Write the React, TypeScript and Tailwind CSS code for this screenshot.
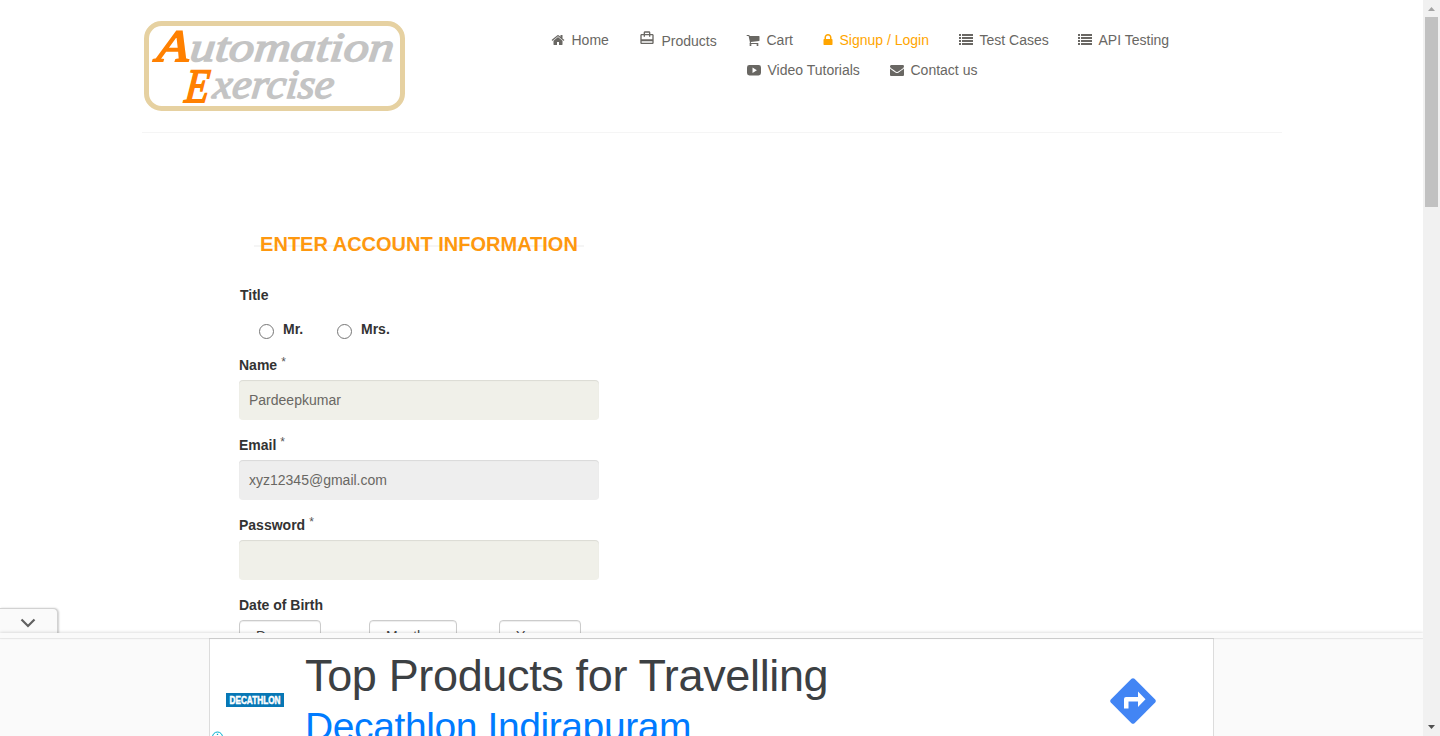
import type { ReactNode } from "react";
import { MdCardTravel } from "react-icons/md";

function Glyph({ d, className }: { d: string; className: string }) {
  return (
    <svg viewBox="0 0 1792 1792" fill="currentColor" className={className}>
      <path d={d} />
    </svg>
  );
}

const HOME =
  "M1472 992v480q0 26-19 45t-45 19h-384v-384h-256v384h-384q-26 0-45-19t-19-45v-480q0-1 .5-3t.5-3l575-474 575 474q1 2 1 6zm223-69l-62 74q-8 9-21 11h-3q-13 0-21-7l-692-577-692 577q-12 8-24 7-13-2-21-11l-62-74q-8-10-7-23.5t11-21.5l719-599q32-26 76-26t76 26l244 204v-195q0-14 9-23t23-9h192q14 0 23 9t9 23v408l219 182q10 8 11 21.5t-7 23.5z";
const CART =
  "M704 1536q0 52-38 90t-90 38-90-38-38-90 38-90 90-38 90 38 38 90zm896 0q0 52-38 90t-90 38-90-38-38-90 38-90 90-38 90 38 38 90zm128-1088v512q0 24-16.5 42.5t-40.5 21.5l-1044 122q13 60 13 70 0 16-24 64h920q26 0 45 19t19 45-19 45-45 19h-1024q-26 0-45-19t-19-45q0-11 8-31.5t16-36 21.5-40 15.5-29.5l-177-823h-204q-26 0-45-19t-19-45 19-45 45-19h256q16 0 28.5 6.5t19.5 15.5 13 24.5 8 26 5.5 29.5 4.5 26h1201q26 0 45 19t19 45z";
const LOCK =
  "M640 768h512v-192q0-106-75-181t-181-75-181 75-75 181v192zm832 96v576q0 40-28 68t-68 28h-960q-40 0-68-28t-28-68v-576q0-40 28-68t68-28h32v-192q0-184 132-316t316-132 316 132 132 316v192h32q40 0 68 28t28 68z";
const ENVELOPE =
  "M1792 710v794q0 66-47 113t-113 47h-1472q-66 0-113-47t-47-113v-794q44 49 101 87 362 246 497 345 57 42 92.5 65.5t94.5 48 110 24.5h2q51 0 110-24.5t94.5-48 92.5-65.5q170-123 498-345 57-39 100-87zm0-294q0 79-49 151t-122 123q-376 261-468 325-10 7-42.5 31t-54 38.5-52 32.5-57.5 27-50 9h-2q-23 0-50-9t-57.5-27-52-32.5-54-38.5-42.5-31q-91-64-262-182.5t-205-142.5q-62-42-117-115.5t-55-136.5q0-78 41.5-130t118.5-52h1472q65 0 112.5 47t47.5 113z";

function ListIcon() {
  return (
    <svg viewBox="0 0 14 14" fill="currentColor" className="size-3.5">
      {[1, 4, 7, 10].map((y) => (
        <g key={y}>
          <rect x="0" y={y} width="2" height="2" />
          <rect x="3" y={y} width="11" height="2" />
        </g>
      ))}
    </svg>
  );
}

function PlayIcon() {
  return (
    <svg viewBox="0 0 14 14" className="size-3.5">
      <rect x="0" y="2" width="14" height="10.4" rx="2.4" fill="currentColor" />
      <path d="M5.5 4.5v5.4l4.4-2.7z" fill="#fff" />
    </svg>
  );
}

function NavItem({ icon, label, className }: { icon: ReactNode; label: string; className: string }) {
  return (
    <a className={`flex h-5 shrink-0 items-center whitespace-nowrap ${className}`}>
      {icon}
      <span>{label}</span>
    </a>
  );
}

function Logo() {
  return (
    <svg viewBox="0 0 264 92" className="h-[92px] w-[264px]" fontFamily="'Liberation Serif', serif" fontStyle="italic">
      <rect x="4.5" y="3.5" width="256" height="85" rx="15" fill="#fff" stroke="#e6d1a1" strokeWidth="5" />
      <text transform="translate(14 41) skewX(-6)" fontSize="45" fill="#ff8000" stroke="#ff8000" strokeWidth="1.8" textLength="32" lengthAdjust="spacingAndGlyphs">A</text>
      <text transform="translate(47 41) skewX(-6)" fontSize="41" stroke="#c4c4c4" strokeWidth="1.5" fill="#c4c4c4" textLength="204" lengthAdjust="spacingAndGlyphs">utomation</text>
      <text transform="translate(42 82) skewX(-6)" fontSize="48" fill="#ff8000" stroke="#ff8000" strokeWidth="1.8" textLength="24" lengthAdjust="spacingAndGlyphs">E</text>
      <text transform="translate(70 78) skewX(-6)" fontSize="41" stroke="#c4c4c4" strokeWidth="1.5" fill="#c4c4c4" textLength="121" lengthAdjust="spacingAndGlyphs">xercise</text>
    </svg>
  );
}

function Field({ label, value, tone }: { label: string; value: string; tone: string }) {
  return (
    <div className="h-20">
      <label className="flex h-[25px] gap-1 text-sm leading-5 font-bold">
        {label}
        <span className="-mt-[3px] text-[12px] font-normal text-[#555]">*</span>
      </label>
      <div className={`flex h-10 items-center rounded px-2.5 text-sm text-[#696763] shadow-[inset_0_1px_1px_rgba(0,0,0,0.09)] ${tone}`}>
        {value}
      </div>
    </div>
  );
}

function Select({ label, width }: { label: string; width: string }) {
  return (
    <div className={`flex h-[34px] items-center rounded border border-[#ccc] bg-white pb-0.5 pl-4 text-sm text-[#444] shadow-[inset_0_1px_1px_rgba(0,0,0,0.075)] ${width}`}>
      {label}
    </div>
  );
}

function Radio({ label }: { label: string }) {
  return (
    <label className="flex w-[78px] gap-[9px] leading-5">
      <span className="mt-[5px] size-[15px] rounded-full border border-[#767676] bg-white" />
      {label}
    </label>
  );
}

function AdBanner() {
  return (
    <div className="absolute inset-x-0 bottom-0 flex h-32 flex-col">
      <div className="z-10 -mb-px flex h-[26px] w-[58px] shrink-0 items-center justify-center rounded-tr-[5px] border-t border-r border-[#d2d2d2] bg-[#fafafa] pt-[3px] pr-px shadow-[1px_0_2px_rgba(0,0,0,0.2)]">
        <svg viewBox="0 0 16 10" className="h-2.5 w-4" fill="none" stroke="#616161" strokeWidth="2.2">
          <path d="M1.5 1.5 8 8l6.5-6.5" />
        </svg>
      </div>
      <div className="z-20 h-[5px] shrink-0 bg-[#fafafa] shadow-[0_-1px_3px_rgba(0,0,0,0.12),0_1px_1px_rgba(0,0,0,0.06)]" />
      <div className="flex grow justify-center overflow-hidden bg-[#fafafa]">
        <div className="flex h-[98px] w-[1005px] border-x border-t border-[#dcdcdc] bg-white">
          <div className="flex w-[95px] shrink-0 flex-col pl-4">
            <div className="mt-[54px] flex h-3.5 w-[58px] shrink-0 items-center justify-center bg-[#0777b5]">
              <svg viewBox="0 0 58 14" className="h-3.5 w-[58px]">
                <text x="3.5" y="10.7" textLength="51" lengthAdjust="spacingAndGlyphs" fontFamily="'Liberation Sans', sans-serif" fontSize="10.5" fontWeight="700" fill="#fff" stroke="#fff" strokeWidth=".5">DECATHLON</text>
              </svg>
            </div>
            <svg viewBox="0 0 12 12" className="mt-[24px] -ml-[15px] size-3 shrink-0" fill="none" stroke="#00aecd">
              <circle cx="6.5" cy="6" r="5" />
              <path d="M6.5 5v4M6.5 2.7v1.2" strokeWidth="1.3" />
            </svg>
          </div>
          <div className="w-[805px] shrink-0 whitespace-nowrap">
            <div className="mt-2.5 h-[50px] text-[45px] leading-[54px] tracking-[-0.35px] text-[#3c4043]">Top Products for Travelling</div>
            <div className="text-[39px] leading-[56px] tracking-[-0.4px] text-[#007bff]">Decathlon Indirapuram</div>
          </div>
          <svg viewBox="0 0 46 46" className="mt-[38.500px] size-[46px] shrink-0">
            <path d="M21.5.8q1.5-1.2 3 0l20.7 20.7q1.2 1.5 0 3L24.5 45.2q-1.500 1.200-3 0L.8 24.500q-1.200-1.500 0-3z" fill="#4285f4" />
            <path d="M14 30.500V21q0-2 2-2h12v-5.500l7.500 7.700-7.500 7.700V23.500h-9.500v7z" fill="#fff" />
          </svg>
        </div>
      </div>
    </div>
  );
}

function Scrollbar() {
  return (
    <div className="flex h-full w-[17px] shrink-0 flex-col items-center bg-[#f1f1f1]">
      <svg viewBox="0 0 17 17" className="size-[17px] shrink-0">
        <path d="M5 11 8.500 7 12 11z" fill="#a3a3a3" />
      </svg>
      <div className="h-[190px] w-[13px] bg-[#c1c1c1]" />
      <svg viewBox="0 0 17 17" className="mt-auto size-[17px] shrink-0">
        <path d="M5 6 8.500 10 12 6z" fill="#505050" />
      </svg>
    </div>
  );
}

export default function App() {
  return (
    <div className="flex h-[736px] w-[1440px] overflow-hidden bg-white font-['Liberation_Sans',Arial,sans-serif] text-sm text-[#333]">
      <div className="relative h-full w-[1423px] overflow-hidden">
        <header className="mx-auto flex h-[133px] w-[1140px] border-b border-[#f5f5f5] pt-5">
          <Logo />
          <nav className="ml-[145px] flex pt-2.5 text-[#696763]">
            <NavItem className="w-[88px] gap-[7px]" label="Home" icon={<Glyph d={HOME} className="size-3.5" />} />
            <NavItem className="mt-px w-[108px] gap-2" label="Products" icon={<MdCardTravel className="-mt-[7px] -mr-px size-4" />} />
            <div className="flex flex-col gap-2.5">
              <div className="flex">
                <NavItem className="w-[76px] gap-[7px]" label="Cart" icon={<Glyph d={CART} className="-ml-px size-3.5" />} />
                <NavItem className="w-[136px] gap-[5px] text-[#ffa500]" label="Signup / Login" icon={<Glyph d={LOCK} className="-ml-[2px] size-3.5" />} />
                <NavItem className="w-[119px] gap-[7px]" label="Test Cases" icon={<ListIcon />} />
                <NavItem className="gap-[7px]" label="API Testing" icon={<ListIcon />} />
              </div>
              <div className="flex">
                <NavItem className="w-[143px] gap-[7px]" label="Video Tutorials" icon={<PlayIcon />} />
                <NavItem className="gap-[7px]" label="Contact us" icon={<Glyph d={ENVELOPE} className="size-3.5" />} />
              </div>
            </div>
          </nav>
        </header>

        <main className="ml-[239px] w-[360px] pt-[100px]">
          <h2 className="ml-[15px] flex h-[22px] w-[330px] items-center justify-center bg-[linear-gradient(#f5f5f5,#f5f5f5)] bg-[length:100%_2px] bg-[position:0_12px] bg-no-repeat text-[20px] leading-[22px] font-bold whitespace-nowrap text-[#fe980f]">
            ENTER ACCOUNT INFORMATION
          </h2>
          <div className="mt-[30px] pl-px leading-5 font-bold">Title</div>
          <div className="mt-3.5 flex h-9 pl-5 font-bold">
            <Radio label="Mr." />
            <Radio label="Mrs." />
          </div>
          <Field label="Name" value="Pardeepkumar" tone="bg-[#f0f0e9]" />
          <Field label="Email" value="xyz12345@gmail.com" tone="bg-[#eee]" />
          <Field label="Password" value="" tone="bg-[#f0f0e9]" />
          <div className="h-[25px] leading-5 font-bold">Date of Birth</div>
          <div className="flex">
            <Select label="Day" width="mr-12 w-[82px]" />
            <Select label="Month" width="mr-[42px] w-[88px]" />
            <Select label="Year" width="w-[82px]" />
          </div>
        </main>
        <AdBanner />
      </div>
      <Scrollbar />
    </div>
  );
}
